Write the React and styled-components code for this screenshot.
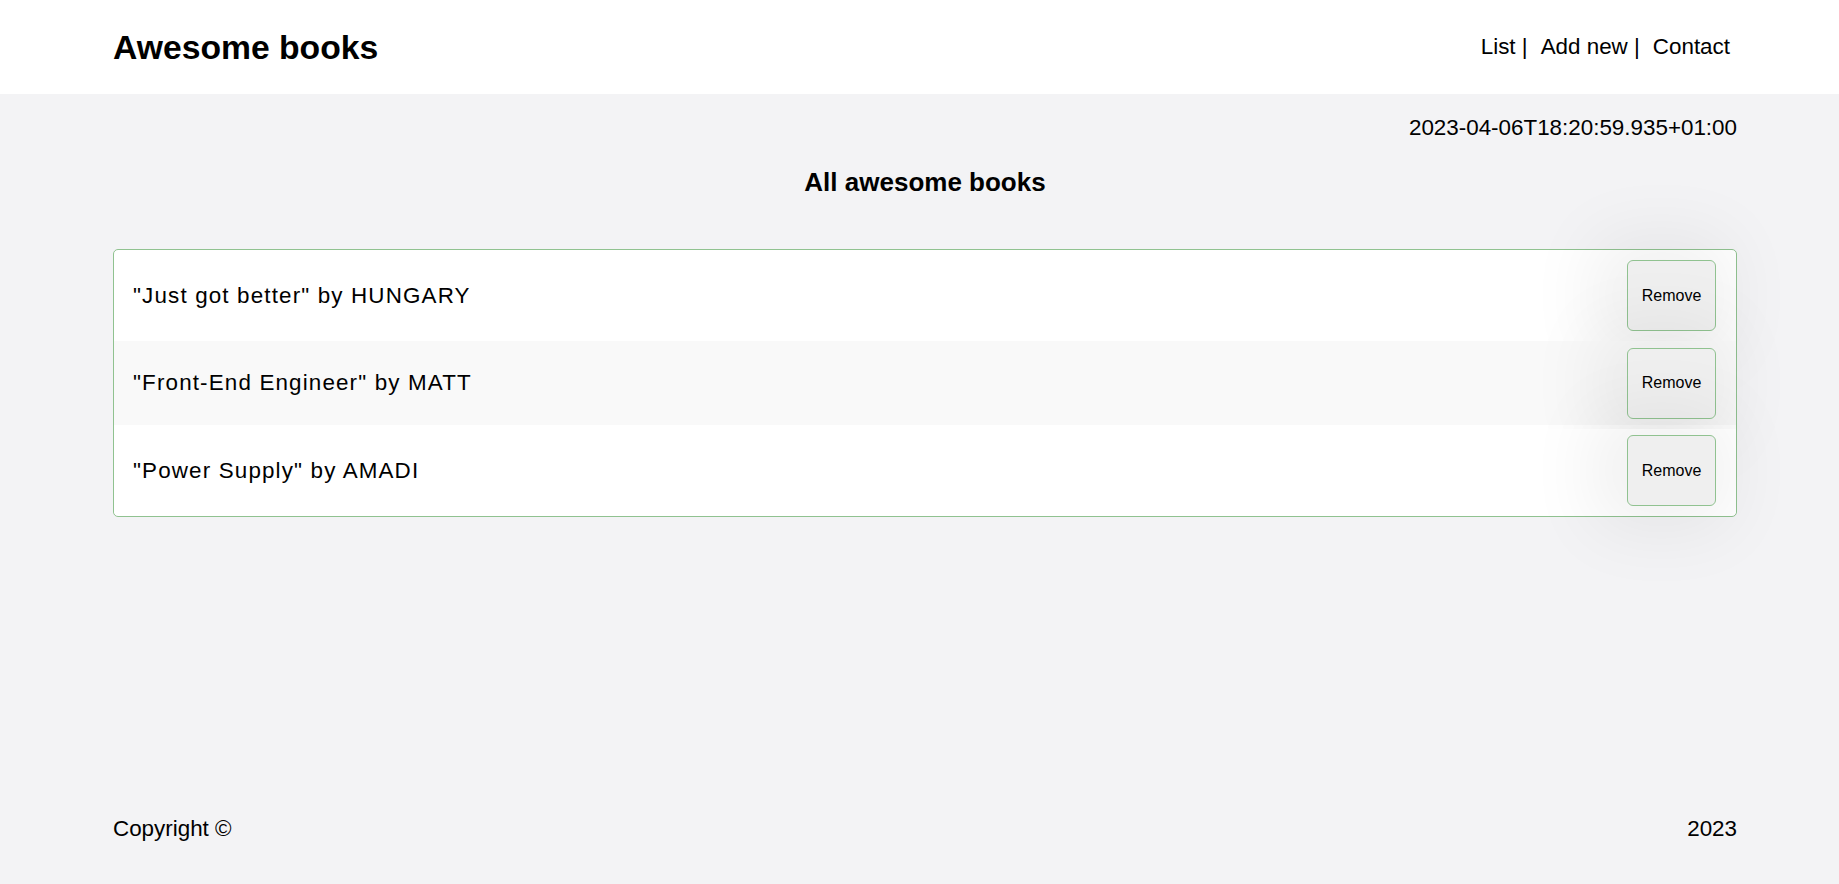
import React from "react";
import styled, { createGlobalStyle } from "styled-components";

const GlobalStyle = createGlobalStyle`
    * {
        box-sizing: border-box;
    }
    body {
        margin: 0;
        background-color: #f3f3f5;
        font-family: "Liberation Sans", Arial, sans-serif;
        color: #000;
    }
`;

const Page = styled.div`
    min-height: 100vh;
    display: flex;
    flex-direction: column;
`;

const Header = styled.header`
    display: flex;
    align-items: center;
    justify-content: space-between;
    height: 94px;
    background-color: #fff;
    padding: 0 102px 0 113px;
`;

const Logo = styled.h1`
    margin: 0;
    font-size: 33.7px;
    font-weight: 700;
`;

const Nav = styled.nav`
    display: flex;
    gap: 13px;
    padding-right: 7px;
    font-size: 22.4px;
`;

const NavLink = styled.a`
    color: #000;
    text-decoration: none;
    cursor: pointer;
`;

const Main = styled.main`
    flex: 1;
    display: flex;
    flex-direction: column;
    padding: 21px 102px 0 113px;
`;

const DateText = styled.p`
    margin: 0;
    text-align: right;
    font-size: 22.4px;
`;

const SectionTitle = styled.h2`
    margin: 26px 0 51px;
    text-align: center;
    font-size: 26px;
    font-weight: 700;
`;

const BookList = styled.ul`
    list-style: none;
    margin: 0;
    padding: 3.5px 0;
    display: flex;
    flex-direction: column;
    gap: 3.5px;
    background-color: #fff;
    border: 1px solid #90c290;
    border-radius: 5px;
`;

const BookRow = styled.li`
    display: flex;
    align-items: center;
    justify-content: space-between;
    height: 84px;
    padding: 0 20px 0 19px;
    background-color: ${({ $striped }) => ($striped ? "#f9f9f9" : "#fff")};
`;

const BookText = styled.span`
    font-size: 22.4px;
    letter-spacing: 1.15px;
`;

const RemoveButton = styled.button`
    width: 89px;
    height: 71px;
    background-color: #efefef;
    border: 1px solid #90c290;
    border-radius: 6px;
    font-family: "Liberation Sans", Arial, sans-serif;
    font-size: 16px;
    color: #000;
    cursor: pointer;
    box-shadow: -10px 0 70px 25px rgba(0, 0, 0, 0.06);
`;

const Footer = styled.footer`
    display: flex;
    justify-content: space-between;
    padding: 0 102px 42px 113px;
    font-size: 22.4px;
`;

const books = [
    { title: "Just got better", author: "HUNGARY" },
    { title: "Front-End Engineer", author: "MATT" },
    { title: "Power Supply", author: "AMADI" },
];

export default function App() {
    return (
        <Page>
            <GlobalStyle />
            <Header>
                <Logo>Awesome books</Logo>
                <Nav>
                    <NavLink>List |</NavLink>
                    <NavLink>Add new |</NavLink>
                    <NavLink>Contact</NavLink>
                </Nav>
            </Header>
            <Main>
                <DateText>2023-04-06T18:20:59.935+01:00</DateText>
                <SectionTitle>All awesome books</SectionTitle>
                <BookList>
                    {books.map((book, i) => (
                        <BookRow key={book.title} $striped={i % 2 === 1}>
                            <BookText>"{book.title}" by {book.author}</BookText>
                            <RemoveButton type="button">Remove</RemoveButton>
                        </BookRow>
                    ))}
                </BookList>
            </Main>
            <Footer>
                <span>Copyright ©</span>
                <span>2023</span>
            </Footer>
        </Page>
    );
}
